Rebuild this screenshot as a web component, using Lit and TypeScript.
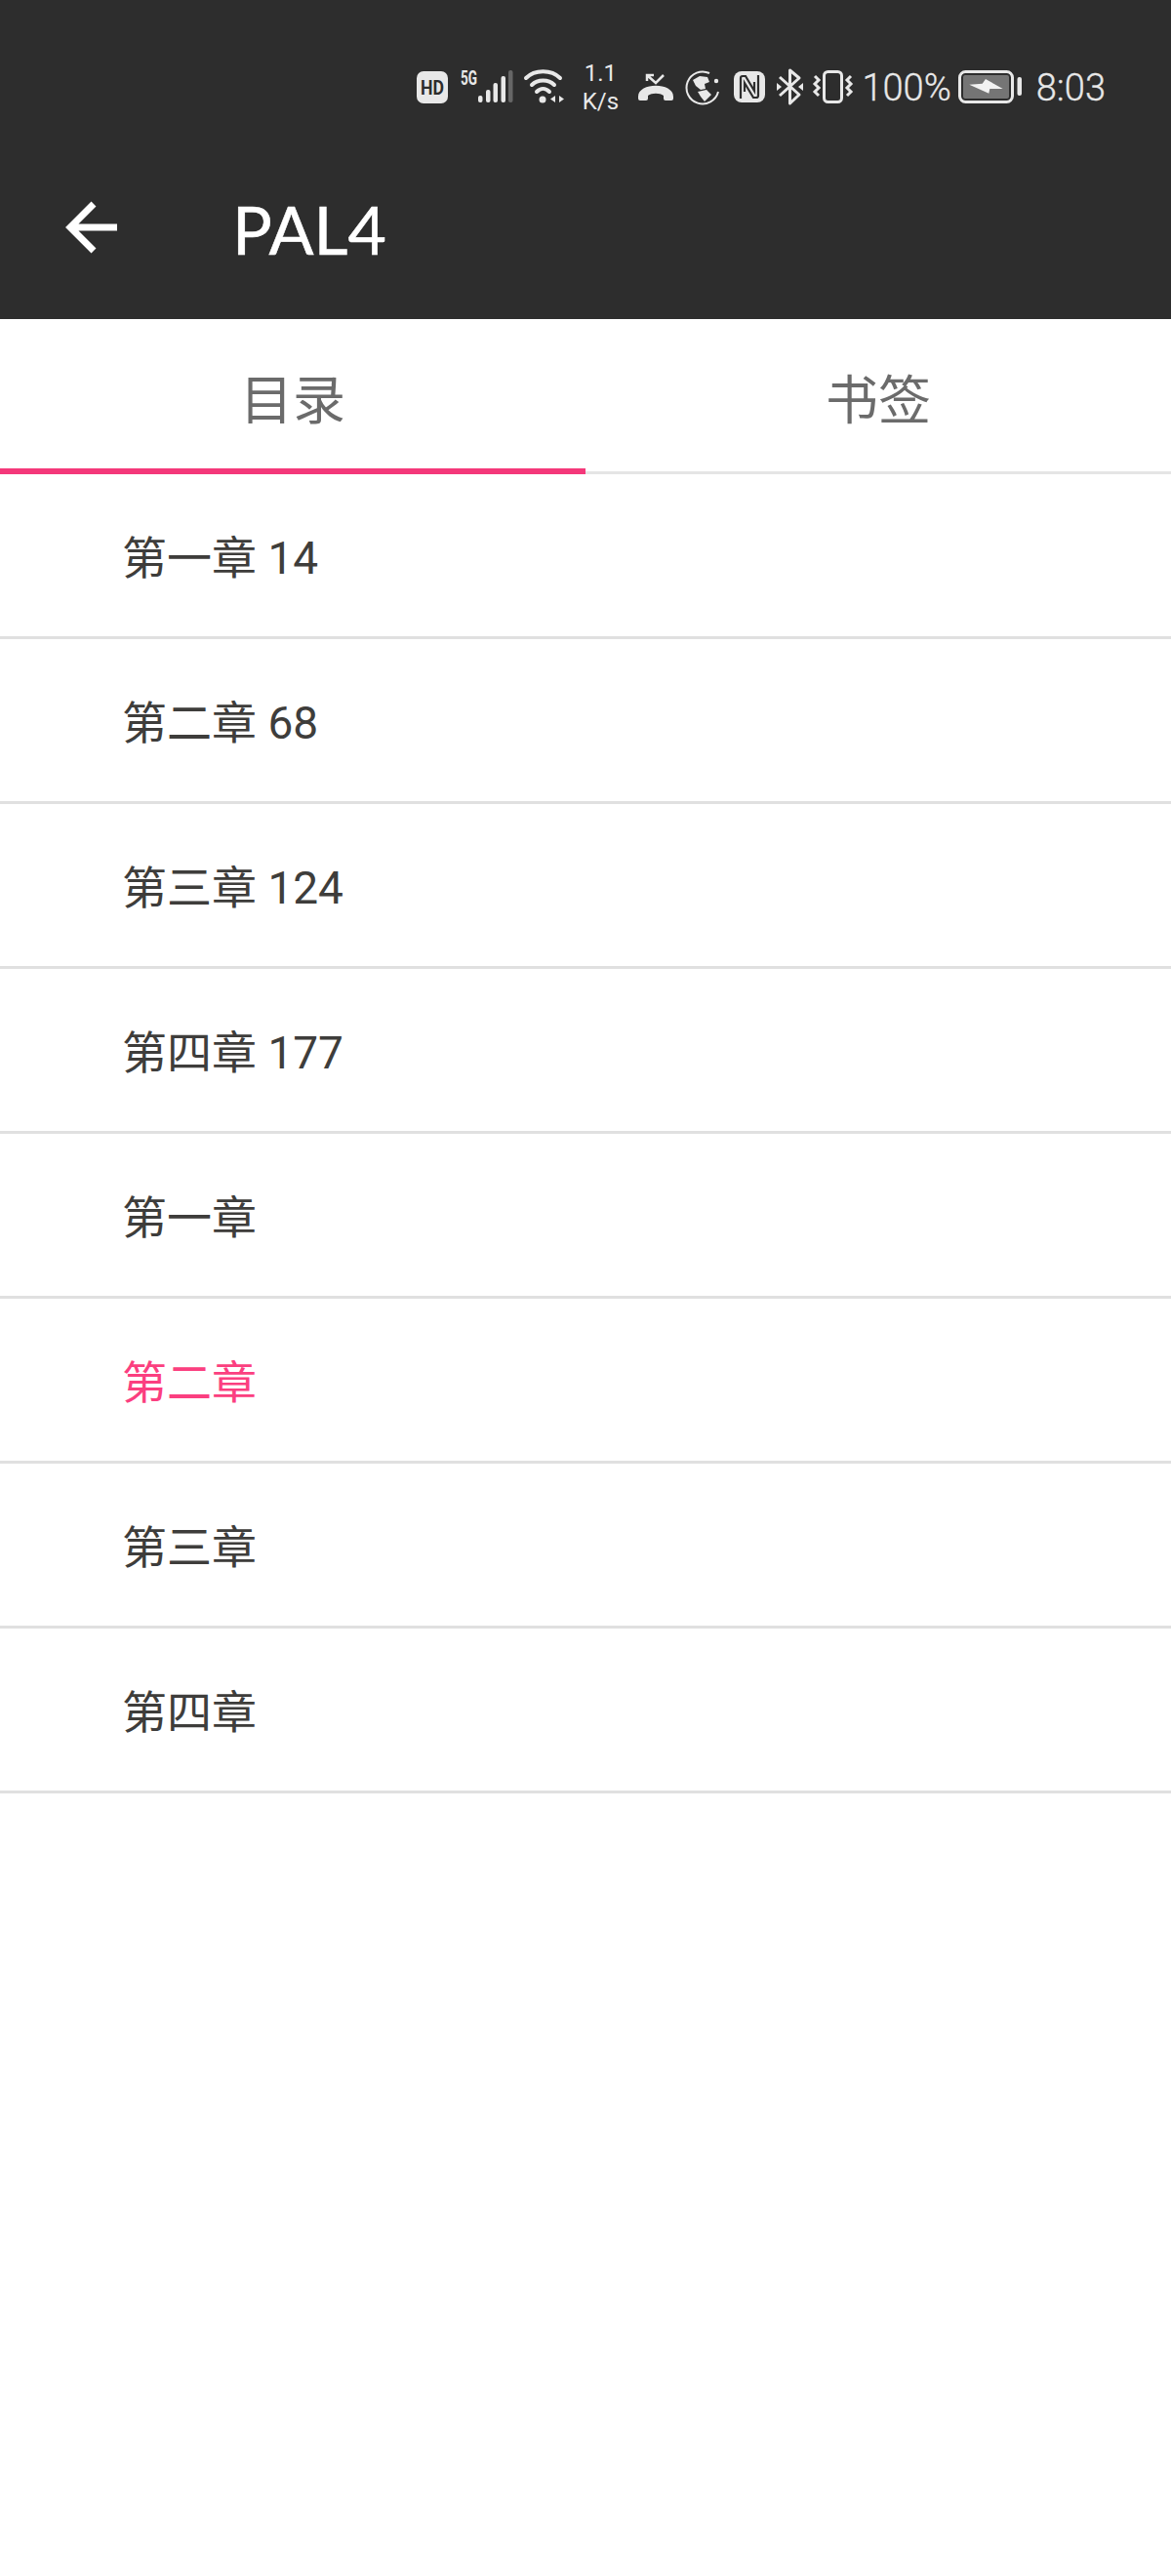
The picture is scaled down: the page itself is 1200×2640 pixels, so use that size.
import { LitElement, html, css } from "lit";
import { customElement } from "lit/decorators.js";

const rows = ["第一章 14", "第二章 68", "第三章 124", "第四章 177", "第一章", "第二章", "第三章", "第四章"];
const ACTIVE = 5;

@customElement("app-root")
export class AppRoot extends LitElement {
  static styles = css`
    :host { display: block; width: 1200px; height: 2640px; background: #fff; font-family: "Noto Sans CJK SC", Roboto, sans-serif; overflow: hidden; }
    .head { height: 327px; background: #2d2d2d; display: flex; flex-direction: column; }
    .status { height: 178px; display: flex; justify-content: flex-end; align-items: center; color: #e8e8e8; padding-right: 67px; box-sizing: border-box; }
    .status svg { display: block; flex: none; overflow: visible; }
    .st { font-family: Roboto, sans-serif; font-size: 38px; font-weight: 300; line-height: 40px; margin-top: 2px; -webkit-text-stroke: 0.3px #e8e8e8; }
    .speed { font-family: Roboto, sans-serif; font-size: 24px; line-height: 29px; text-align: center; width: 40px; margin-top: 2px; white-space: nowrap; }
    .m-hd { margin-right: 13px; }
    .m-sig { margin-right: 10px; }
    .m-wifi { margin-right: 17px; }
    .m-speed { margin-right: 19px; }
    .m-call { margin-right: 11px; }
    .m-globe { margin-right: 15px; }
    .m-nfc { margin-right: 12px; }
    .m-bt { margin-right: 10px; }
    .m-vib { margin-right: 9px; }
    .m-pct { margin-right: 7px; }
    .m-bat { margin-right: 15px; }
    .bar { height: 149px; display: flex; align-items: flex-start; color: #fff; }
    .back { margin: 27px 0 0 66px; width: 54px; height: 56px; flex: none; }
    .title { margin: 22px 0 0 118px; font-family: Lato, sans-serif; font-size: 68px; line-height: 70px; font-weight: 400; -webkit-text-stroke: 0.5px #fff; }
    .tabs { display: flex; height: 159px; border-bottom: 3px solid #e5e5e5; box-sizing: border-box; }
    .tab { flex: 1; display: flex; align-items: center; justify-content: center; font-size: 54px; color: #6b6b6b; padding-top: 2px; box-sizing: border-box; }
    .tab.on { position: relative; }
    .tab.on::after { content: ""; position: absolute; left: 0; right: 0; bottom: -3px; height: 6px; background: #f4387a; }
    .row { height: 169px; box-sizing: border-box; border-bottom: 3px solid #e0e0e0; display: flex; align-items: center; padding: 0 0 2px 125px; font-size: 46px; color: #3e3d3b; }
    .row.on { color: #fb3f80; }
    .row span { font-family: Roboto, "Noto Sans CJK SC", sans-serif; font-weight: 400; }
  `;

  private statusIcons() {
    return html`
      <svg class="m-hd" width="32" height="33" viewBox="0 0 32 33"><rect width="32" height="33" rx="7" fill="#e8e8e8"/><text x="16" y="24" font-family="Roboto" font-weight="700" font-size="21" text-anchor="middle" fill="#2d2d2d" textLength="24" lengthAdjust="spacingAndGlyphs">HD</text></svg>
      <svg class="m-sig" width="54" height="34" viewBox="0 0 54 34"><text x="0" y="15" font-family="Roboto" font-weight="700" font-size="20" fill="#e8e8e8" textLength="17" lengthAdjust="spacingAndGlyphs">5G</text>
        <g fill="#e8e8e8"><rect x="18" y="26" width="4.500" height="7" rx="2"/><rect x="26" y="20" width="4.500" height="13" rx="2"/><rect x="33.500" y="13" width="4.500" height="20" rx="2"/><rect x="41.500" y="6" width="4.500" height="27" rx="2"/></g><rect x="49" y="0" width="4.500" height="33" rx="2" fill="#666"/></svg>
      <svg class="m-wifi" width="42" height="34" viewBox="0 0 42 34" fill="none"><g stroke="#e8e8e8" stroke-width="4" stroke-linecap="round"><path d="M3 8C12 -1 29 -1 38 8"/><path d="M9 15C15 9 26 9 32 15"/><path d="M14 22C18 18 23 18 27 22"/></g><circle cx="20" cy="30" r="3.500" fill="#e8e8e8"/><path d="M33 26v7l-5-3.500zM37 26v7l5-3.500z" fill="#e8e8e8"/></svg>
      <div class="speed m-speed">1.1<br>K/s</div>
      <svg class="m-call" width="36" height="30" viewBox="0 0 36 30" fill="none"><path d="M9 9V3h7M9 3l9 8 8-8" stroke="#e8e8e8" stroke-width="2.500"/><path d="M0 25C0 10 36 10 36 25v2q0 2-2 2H28q-2 0-2-2v-3C22 21 14 21 10 24v3q0 2-2 2H2q-2 0-2-2z" fill="#e8e8e8"/></svg>
      <svg class="m-globe" width="36" height="37" viewBox="0 0 36 37" fill="none"><path d="M26 4A16.500 16.500 0 1 0 35 23" stroke="#e8e8e8" stroke-width="2"/><circle cx="33" cy="12" r="2.200" fill="#e8e8e8"/><path d="M9 11 16 7 24 8 26 13 21 15 22 20 17 21 12 17zM14 23 23 21 28 26 21 33 17 28z" fill="#e8e8e8"/></svg>
      <svg class="m-nfc" width="32" height="32" viewBox="0 0 32 32" fill="none"><rect width="32" height="32" rx="8" fill="#e8e8e8"/><path d="M7 28V7q0-2 2-2h3l9 15v-9M25 4v21q0 2-2 2h-3l-9-15v9" stroke="#2d2d2d" stroke-width="2.200"/></svg>
      <svg class="m-bt" width="27" height="38" viewBox="0 0 27 38" fill="none"><path d="M3 9 23 27 13.500 36V2L23 10 3 28" stroke="#e8e8e8" stroke-width="3" stroke-linejoin="round"/><path d="M0 15l5 4-5 4zM27 15l-5 4 5 4z" fill="#e8e8e8"/></svg>
      <svg class="m-vib" width="41" height="34" viewBox="0 0 41 34" fill="none"><rect x="11.500" y="1.500" width="18" height="31" rx="4" stroke="#e8e8e8" stroke-width="3"/><path d="M2 6l4 4-4 4 4 4-4 4 4 4M39 6l-4 4 4 4-4 4 4 4-4 4" stroke="#e8e8e8" stroke-width="3"/></svg>
      <div class="st m-pct">100%</div>
      <svg class="m-bat" width="65" height="34" viewBox="0 0 65 34" fill="none"><rect x="1.500" y="1.500" width="54" height="31" rx="6" stroke="#e8e8e8" stroke-width="3"/><rect x="5" y="5" width="47" height="24" rx="2" fill="#757575"/><path d="M11.300 14.700 24.700 13.700 28 9 45.700 19 32.300 19 31.300 23.700z" fill="#f2f2f2"/><rect x="60.500" y="7" width="4.500" height="19" rx="2" fill="#e8e8e8"/></svg>
      <div class="st">8:03</div>
    `;
  }

  render() {
    return html`
      <div class="head">
        <div class="status">${this.statusIcons()}</div>
        <div class="bar">
          <svg class="back" viewBox="0 0 54 56" fill="none"><path d="M54 28H6M30 4 6 28 30 52" stroke="#fff" stroke-width="7"/></svg>
          <div class="title">PAL4</div>
        </div>
      </div>
      <div class="tabs"><div class="tab on">目录</div><div class="tab">书签</div></div>
      ${rows.map((r, i) => html`<div class="row ${i === ACTIVE ? "on" : ""}"><span>${r}</span></div>`)}
    `;
  }
}
